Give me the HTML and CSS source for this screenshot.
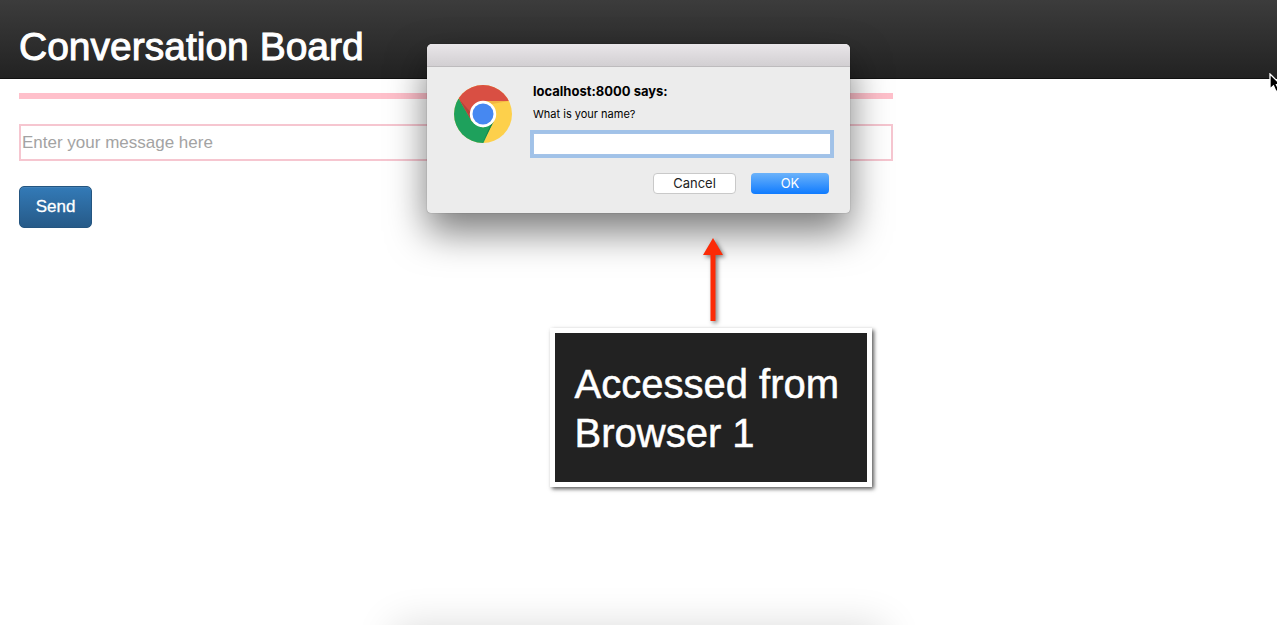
FILE: index.html
```html
<!DOCTYPE html>
<html lang="en">
<head>
<meta charset="utf-8">
<meta name="viewport" content="width=device-width, initial-scale=1">
<title>Conversation Board</title>
<link rel="stylesheet" href="styles.css">
</head>
<body>
<header class="topbar">
  <h1 class="topbar-title">Conversation Board</h1>
</header>
<main class="board">
  <hr class="board-rule">
  <form class="composer">
    <input class="composer-input" type="text" aria-label="Message" placeholder="Enter your message here">
    <button class="composer-send" type="button">Send</button>
  </form>
</main>

<div class="overlay">
  <dialog class="prompt" open aria-labelledby="prompt-title">
    <div class="prompt-bar"></div>
    <form class="prompt-body">
      <svg class="prompt-logo" viewBox="0 0 58 58" aria-hidden="true">
        <defs>
          <clipPath id="disc"><circle cx="29" cy="29" r="29"/></clipPath>
        </defs>
        <g clip-path="url(#disc)">
          <rect width="58" height="58" fill="#fdd04b"/>
          <path d="M0 0H58V16H29L16 35L5 14Z" fill="#d94f43"/>
          <path d="M5 14L17.5 36L29 42.500L38.500 38.500L28.500 60H-2V12Z" fill="#1ea15c"/>
          <path d="M5 14L17.700 35.500L16 30L16.500 27Z" fill="#b8443a"/>
          <path d="M29 16H55L38 19Z" fill="#f2b544"/>
          <path d="M40 36L28.500 58L36.500 40Z" fill="#16804a"/>
        </g>
        <circle cx="29" cy="29" r="13.200" fill="#fff"/>
        <circle cx="29" cy="29" r="10.500" fill="#4688f1"/>
      </svg>
      <div class="prompt-content">
        <h2 class="prompt-title" id="prompt-title">localhost:8000 says:</h2>
        <label class="prompt-label" for="name">What is your name?</label>
        <input class="prompt-input" id="name" type="text">
        <div class="prompt-actions">
          <button class="prompt-button" type="button">Cancel</button>
          <button class="prompt-button prompt-button-primary" type="button">OK</button>
        </div>
      </div>
    </form>
  </dialog>
</div>

<aside class="note">
  <svg class="note-arrow" viewBox="0 0 20 84" aria-hidden="true">
    <path d="M10 0L20 17H12.500V83H7.500V17H0Z" fill="#fb2b07"/>
  </svg>
  <p class="note-text">Accessed from<br>Browser 1</p>
</aside>

<div class="lower-shade"><div class="lower-shade-source"></div></div>

<svg class="pointer" viewBox="0 0 12 20" aria-hidden="true">
  <path d="M1 1V16L4.500 12.800L7 18.500L10 17.200L7.500 11.700H12Z" fill="#000" stroke="#fff" stroke-width="1.300"/>
</svg>
</body>
</html>
```
FILE: styles.css
```css
* {
  box-sizing: border-box;
}

body {
  margin: 0;
  min-height: 100vh;
  overflow: hidden;
  position: relative;
  background: #fff;
  font-family: "Liberation Sans", Arial, sans-serif;
}

.topbar {
  padding: 25px 19px 9px;
  background: linear-gradient(#3c3c3c, #222);
  border-bottom: 1px solid #111;
}

.topbar-title {
  margin: 0;
  color: #fff;
  font-size: 39px;
  font-weight: 400;
  line-height: 44px;
  -webkit-text-stroke: 1px #fff;
}

.board {
  width: 70%;
  padding: 14px 1px 0 19px;
}

.board-rule {
  height: 6px;
  margin: 0 0 25px;
  border: 0;
  background: #ffc0cb;
}

.composer {
  display: flex;
  flex-direction: column;
  align-items: flex-start;
  gap: 25px;
}

.composer-input {
  width: 100%;
  height: 37px;
  padding: 0 1px;
  border: 2px solid #f6c6d0;
  border-radius: 0;
  background: #fff;
  font: 17px "Liberation Sans", Arial, sans-serif;
}

.composer-input::placeholder {
  color: #a3a3a3;
}

.composer-send {
  min-width: 73px;
  height: 42px;
  padding: 0 15px;
  border: 1px solid #245580;
  border-radius: 5px;
  background: linear-gradient(#337ab7, #265a88);
  box-shadow: inset 0 1px 0 #4382b8;
  color: #fff;
  font: 17px "Liberation Sans", Arial, sans-serif;
  -webkit-text-stroke: 0.3px #fff;
}

.overlay {
  position: absolute;
  top: 44px;
  left: 0;
  right: 0;
  display: flex;
  justify-content: center;
}

.prompt {
  position: static;
  width: 423px;
  margin: 0;
  padding: 0;
  overflow: hidden;
  border: 0;
  border-radius: 5px 5px 4px 4px;
  background: #ececec;
  box-shadow: 0 0 1px rgba(0, 0, 0, 0.5), 0 19px 38px rgba(0, 0, 0, 0.52);
  color: #000;
  font-family: Inter, "Open Sans", sans-serif;
}

.prompt-bar {
  height: 23px;
  border-bottom: 1px solid #bdbbbd;
  background: linear-gradient(#e9e6e9, #d2cfd2);
}

.prompt-body {
  display: flex;
  gap: 18px;
  padding: 16px 16px 19px 27px;
}

.prompt-logo {
  flex: none;
  width: 58px;
  height: 58px;
  margin-top: 2px;
}

.prompt-content {
  flex: 1;
  display: flex;
  flex-direction: column;
}

.prompt-title {
  margin: 0 0 8px 3px;
  font-size: 13px;
  font-weight: 700;
  line-height: 16px;
}

.prompt-label {
  margin: 0 0 12px 3px;
  font-size: 11px;
  line-height: 14px;
}

.prompt-input {
  width: auto;
  height: 22px;
  margin: 0 3px;
  padding: 0 3px;
  border: 1px solid #a4c3e8;
  border-radius: 0;
  outline: 0;
  background: #fff;
  box-shadow: 0 0 0 3px #a1c2e8;
  font: 13px Inter, sans-serif;
}

.prompt-actions {
  display: flex;
  justify-content: flex-end;
  gap: 15px;
  margin: 18px 5px 0 0;
}

.prompt-button {
  width: 83px;
  height: 21px;
  padding: 0;
  border: 1px solid #c9c9c9;
  border-radius: 4px;
  background: #fff;
  color: #222;
  font: 13px/19px Inter, sans-serif;
}

.prompt-button-primary {
  width: 78px;
  border: 0;
  background: linear-gradient(#6cb3fa, #0f7bff);
  color: #fff;
}

.note {
  position: absolute;
  top: 238px;
  left: 50%;
  display: flex;
  flex-direction: column;
  align-items: center;
  margin-left: -89px;
}

.note-arrow {
  width: 20px;
  height: 84px;
  margin-left: 4px;
  overflow: visible;
  filter: drop-shadow(2px 2px 2px rgba(0, 0, 0, 0.5));
}

.note-text {
  margin: 6px 0 0;
  padding: 27px 28px 24px 20px;
  border: 5px solid #fff;
  background: #222;
  box-shadow: 2px 2px 4px rgba(0, 0, 0, 0.65);
  color: #fff;
  font-size: 40px;
  line-height: 49px;
  white-space: nowrap;
  -webkit-text-stroke: 0.5px #fff;
}

.lower-shade {
  position: absolute;
  right: 0;
  bottom: 0;
  left: 0;
  height: 60px;
  overflow: hidden;
  pointer-events: none;
}

.lower-shade-source {
  width: 490px;
  height: 60px;
  margin: 60px auto 0;
  box-shadow: 0 0 40px rgba(0, 0, 0, 0.14);
}

.pointer {
  position: absolute;
  top: 73px;
  right: -4px;
  width: 12px;
  height: 20px;
}
```
